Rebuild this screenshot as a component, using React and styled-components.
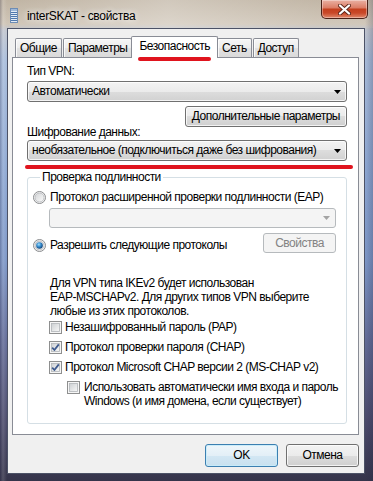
import React from "react";
import styled, { createGlobalStyle, css } from "styled-components";

const Global = createGlobalStyle`
  html, body { margin: 0; padding: 0; }
  body {
    width: 373px; height: 481px; overflow: hidden;
    font-family: "Liberation Sans", Arial, sans-serif;
  }
  * { box-sizing: border-box; }
`;

const Window = styled.div`
  width: 373px;
  height: 481px;
  display: flex;
  flex-direction: column;
  padding: 0 8px 7px 7px;
  font: 12px "Liberation Sans", Arial, sans-serif;
  letter-spacing: -0.5px;
  color: #000;
  background:
    linear-gradient(to right, rgba(255,255,255,0) 0, rgba(255,255,255,0.28) 45%, rgba(255,255,255,0.05) 85%) top / 100% 28px no-repeat,
    linear-gradient(to right, rgba(40,40,70,0.25) 0, rgba(255,255,255,0.15) 3px, rgba(255,255,255,0) 7px, rgba(255,255,255,0) 365px, rgba(40,40,70,0.25) 373px),
    linear-gradient(to bottom, #bfb3a2 0, #cfc5b7 24px, #c2c6cf 30px, #a9bddb 60px, #8ea8d3 170px, #7d97c7 260px, #646d99 340px, #4c4b6c 420px, #35344a 481px);
`;

const TitleBar = styled.div`
  height: 28px;
  flex-shrink: 0;
  display: flex;
  align-items: flex-start;
  padding-left: 3px;
`;

const AppIcon = styled.svg`
  margin-top: 8px;
  flex-shrink: 0;
`;

const Title = styled.div`
  margin: 9px 0 0 9px;
  line-height: 15px;
  font-size: 12px;
  letter-spacing: -0.3px;
  text-shadow: 0 0 6px rgba(255, 255, 255, 0.9), 0 0 10px rgba(255, 255, 255, 0.6);
`;

const CloseButton = styled.div`
  width: 47px;
  height: 19px;
  margin-left: auto;
  margin-right: -3px;
  display: flex;
  align-items: center;
  justify-content: center;
  border: 1px solid #4a2219;
  border-top: none;
  border-radius: 0 0 5px 5px;
  background: linear-gradient(#eab1a3 0%, #dc7f68 42%, #c4401f 52%, #c94828 72%, #e0896c 100%);
  box-shadow: inset 0 0 0 1px rgba(255, 255, 255, 0.35);
`;

const Client = styled.div`
  flex: 1;
  display: flex;
  flex-direction: column;
  min-height: 0;
  background: #f0f0f0;
  border: 1px solid #4c5266;
  padding: 7px 5px 6px 4px;
`;

const TabStrip = styled.div`
  height: 22px;
  margin-bottom: -1px;
  padding-left: 3px;
  display: flex;
  align-items: flex-end;
  position: relative;
  z-index: 2;
  flex-shrink: 0;
`;

const Tab = styled.div`
  position: relative;
  height: 19px;
  margin: 0 1px 1px 0;
  padding: 0 4px;
  display: flex;
  align-items: center;
  line-height: 15px;
  white-space: nowrap;
  border: 1px solid #898c95;
  border-bottom: none;
  border-radius: 2px 2px 0 0;
  background: linear-gradient(#f6f6f6 0%, #ececec 50%, #e2e2e2 50%, #dadada 100%);
  box-shadow: inset 1px 1px 0 rgba(255, 255, 255, 0.8);
  ${(p) =>
    p.$active &&
    css`
      height: 22px;
      margin: 0 -1px 0 -2px;
      padding: 0 7px 3px;
      background: #fff;
      box-shadow: none;
    `}
`;

const Mark = styled.div`
  position: absolute;
  left: 6px;
  right: 6px;
  bottom: -3px;
  height: 4px;
  border-radius: 2px;
  background: #e0141e;
`;

const Panel = styled.div`
  flex: 1;
  min-height: 0;
  display: flex;
  flex-direction: column;
  background: #fff;
  border: 1px solid #898c95;
  padding: 6px 11px 9px 14px;
`;

const Label = styled.div`
  line-height: 15px;
  margin-top: ${(p) => p.$mt || 0}px;
`;

const ComboBox = styled.div`
  height: ${(p) => (p.$disabled ? 20 : 21)}px;
  margin-top: ${(p) => p.$mt || 0}px;
  margin-left: ${(p) => p.$ml || 0}px;
  display: flex;
  align-items: center;
  padding: 0 5px 0 4px;
  border: 1px solid #707070;
  border-radius: 3px;
  background: linear-gradient(#f3f3f3 0%, #ebebeb 50%, #dddddd 50%, #d1d1d1 100%);
  box-shadow: inset 0 0 0 1px rgba(255, 255, 255, 0.75);
  line-height: 15px;
  ${(p) =>
    p.$disabled &&
    css`
      border-color: #b6babd;
      background: #f4f4f4;
      box-shadow: none;
    `}
  & > svg { flex-shrink: 0; }
`;

const ComboText = styled.span`
  flex: 1;
  white-space: nowrap;
  overflow: hidden;
`;

const ButtonRow = styled.div`
  display: flex;
  justify-content: flex-end;
  margin-top: ${(p) => p.$mt || 0}px;
`;

const Button = styled.div`
  height: ${(p) => p.$h || 21}px;
  width: ${(p) => (p.$w ? `${p.$w}px` : "auto")};
  padding: 0 6px;
  display: flex;
  align-items: center;
  justify-content: center;
  white-space: nowrap;
  line-height: 15px;
  border: 1px solid #707070;
  border-radius: 3px;
  background: linear-gradient(#f3f3f3 0%, #ebebeb 50%, #dddddd 50%, #cfcfcf 100%);
  box-shadow: inset 0 0 0 1px rgba(255, 255, 255, 0.75);
  ${(p) =>
    p.$default &&
    css`
      border-color: #3c7fb1;
      background: linear-gradient(#eef6fb 0%, #e3eff7 50%, #d3e7f4 50%, #c8e0ef 100%);
      box-shadow: inset 0 0 0 1px rgba(200, 236, 250, 0.9);
    `}
  ${(p) =>
    p.$disabled &&
    css`
      border-color: #b6babd;
      background: #f4f4f4;
      box-shadow: none;
      color: #838383;
    `}
`;

const Highlight = styled.div`
  height: 4px;
  margin: 4px -6px 0 -2px;
  border-radius: 2px;
  background: #e0141e;
  flex-shrink: 0;
`;

const Group = styled.fieldset`
  margin: 1px 0 0 0;
  padding: 5px 10px 15px 5px;
  min-width: 0;
  border: 1px solid #d5dfe5;
  border-radius: 3px;
  display: flex;
  flex-direction: column;
`;

const Legend = styled.legend`
  margin-left: 7px;
  padding: 0 2px;
  line-height: 15px;
`;

const Option = styled.div`
  display: flex;
  align-items: ${(p) => (p.$top ? "flex-start" : "center")};
  gap: ${(p) => p.$gap || 4}px;
  margin-left: ${(p) => p.$ml || 0}px;
  margin-top: ${(p) => p.$mt || 0}px;
  line-height: ${(p) => p.$lh || 15}px;
  white-space: nowrap;
  & > svg {
    flex-shrink: 0;
    margin-top: ${(p) => (p.$top ? 1 : 0)}px;
  }
`;

const ProtocolRow = styled.div`
  display: flex;
  justify-content: space-between;
  align-items: flex-end;
  margin-top: 5px;
`;

const Note = styled.div`
  margin: 23px 0 0 17px;
  line-height: 14px;
`;

const Footer = styled.div`
  display: flex;
  justify-content: flex-end;
  gap: 8px;
  margin-top: 9px;
  flex-shrink: 0;
`;

function Arrow({ disabled }) {
  return (
    <svg width="7" height="4" viewBox="0 0 7 4">
      <path d="M0 0 H7 L3.5 4 Z" fill={disabled ? "#a3a3a3" : "#000"} />
    </svg>
  );
}

function Radio({ checked, id }) {
  return (
    <svg width="13" height="13" viewBox="0 0 13 13">
      <defs>
        <linearGradient id={`rf${id}`} x1="0" y1="0" x2="1" y2="1">
          <stop offset="0" stopColor="#d2d4d6" />
          <stop offset="1" stopColor="#fbfbfb" />
        </linearGradient>
        <radialGradient id={`rd${id}`} cx="0.4" cy="0.35" r="0.7">
          <stop offset="0" stopColor="#9fe0ff" />
          <stop offset="0.45" stopColor="#3a8fd0" />
          <stop offset="1" stopColor="#0d3b6e" />
        </radialGradient>
      </defs>
      <circle cx="6.5" cy="6.5" r="6" fill="#f4f4f4" stroke="#8a8c8e" />
      <circle cx="6.5" cy="6.5" r="4.5" fill={`url(#rf${id})`} stroke="#b6b9bc" strokeWidth="0.8" />
      {checked && <circle cx="6.5" cy="6.5" r="3.3" fill={`url(#rd${id})`} />}
    </svg>
  );
}

function Check({ checked, id }) {
  return (
    <svg width="13" height="13" viewBox="0 0 13 13">
      <defs>
        <linearGradient id={`cf${id}`} x1="0" y1="0" x2="1" y2="1">
          <stop offset="0" stopColor="#cdd0d3" />
          <stop offset="1" stopColor="#f8f8f8" />
        </linearGradient>
      </defs>
      <rect x="0.5" y="0.5" width="12" height="12" fill="#f6f6f6" stroke="#8e8f8f" />
      <rect x="2.5" y="2.5" width="8" height="8" fill={`url(#cf${id})`} stroke="#b1b5b9" strokeWidth="0.8" />
      {checked && (
        <path d="M3.2 6.6 L5.4 9 L9.8 3.4" fill="none" stroke="#3e5a8e" strokeWidth="1.8" strokeLinejoin="round" />
      )}
    </svg>
  );
}

export default function App() {
  return (
    <>
      <Global />
      <Window>
        <TitleBar>
          <AppIcon width="8" height="15" viewBox="0 0 8 15">
            <rect x="0.5" y="0.5" width="7" height="14" fill="#e3ebf4" stroke="#6d8cb4" />
            <rect x="1" y="1" width="6" height="2" fill="#9fb8d8" />
            {[4, 6, 8, 10, 12].map((y) => (
              <rect key={y} x="1" y={y} width="6" height="1" fill="#4f78ad" />
            ))}
          </AppIcon>
          <Title>interSKAT - свойства</Title>
          <CloseButton>
            <svg width="13" height="11" viewBox="0 0 13 11">
              <path d="M2 1.5 L11 9.5 M11 1.5 L2 9.5" stroke="#5a2418" strokeWidth="4" strokeLinecap="round" />
              <path d="M2 1.5 L11 9.5 M11 1.5 L2 9.5" stroke="#fff" strokeWidth="2.3" strokeLinecap="round" />
            </svg>
          </CloseButton>
        </TitleBar>
        <Client>
          <TabStrip>
            <Tab>Общие</Tab>
            <Tab>Параметры</Tab>
            <Tab $active>
              Безопасность
              <Mark />
            </Tab>
            <Tab>Сеть</Tab>
            <Tab>Доступ</Tab>
          </TabStrip>
          <Panel>
            <Label>Тип VPN:</Label>
            <ComboBox $mt={2}>
              <ComboText>Автоматически</ComboText>
              <Arrow />
            </ComboBox>
            <ButtonRow $mt={4}>
              <Button>Дополнительные параметры</Button>
            </ButtonRow>
            <Label $mt={-2}>Шифрование данных:</Label>
            <ComboBox>
              <ComboText>необязательное (подключиться даже без шифрования)</ComboText>
              <Arrow />
            </ComboBox>
            <Highlight />
            <Group>
              <Legend>Проверка подлинности</Legend>
              <Option>
                <Radio id="1" />
                Протокол расширенной проверки подлинности (EAP)
              </Option>
              <ComboBox $disabled $mt={3} $ml={16}>
                <ComboText />
                <Arrow disabled />
              </ComboBox>
              <ProtocolRow>
                <Option>
                  <Radio id="2" checked />
                  Разрешить следующие протоколы
                </Option>
                <Button $disabled $h={20} $w={73}>
                  Свойства
                </Button>
              </ProtocolRow>
              <Note>
                Для VPN типа IKEv2 будет использован
                <br />
                EAP-MSCHAPv2. Для других типов VPN выберите
                <br />
                любые из этих протоколов.
              </Note>
              <Option $ml={16} $mt={2} $gap={3}>
                <Check id="1" />
                Незашифрованный пароль (PAP)
              </Option>
              <Option $ml={16} $mt={5} $gap={3}>
                <Check id="2" checked />
                Протокол проверки пароля (CHAP)
              </Option>
              <Option $ml={16} $mt={5} $gap={3}>
                <Check id="3" checked />
                Протокол Microsoft CHAP версии 2 (MS-CHAP v2)
              </Option>
              <Option $ml={34} $mt={5} $gap={4} $top $lh={14}>
                <Check id="4" />
                <span>
                  Использовать автоматически имя входа и пароль
                  <br />
                  Windows (и имя домена, если существует)
                </span>
              </Option>
            </Group>
          </Panel>
          <Footer>
            <Button $default $h={23} $w={73}>
              OK
            </Button>
            <Button $h={23} $w={73}>
              Отмена
            </Button>
          </Footer>
        </Client>
      </Window>
    </>
  );
}
